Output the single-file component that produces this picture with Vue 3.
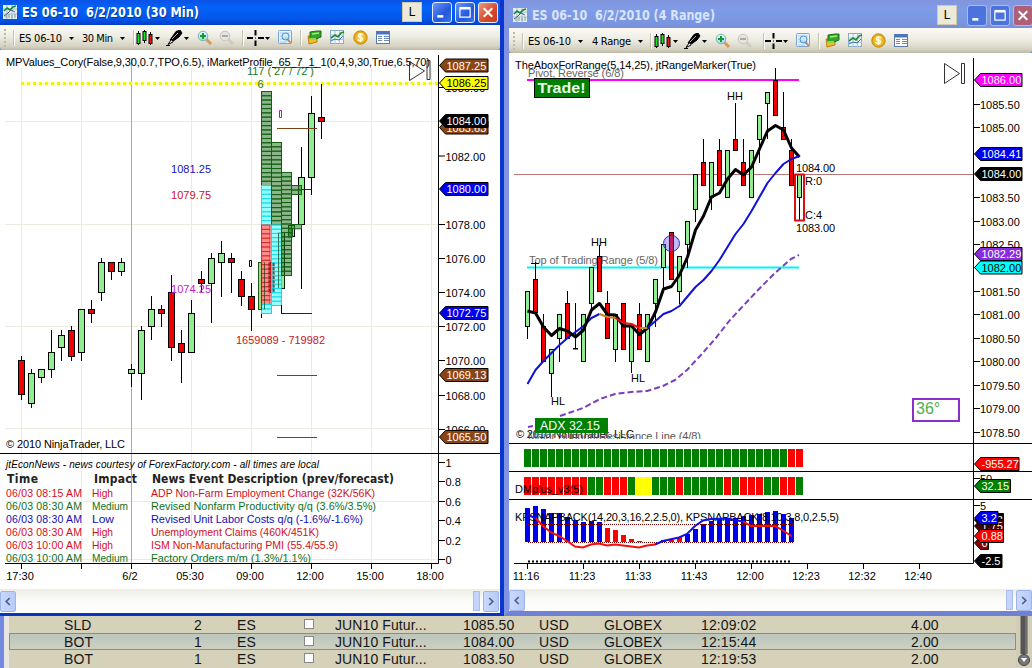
<script setup>
const up = '#90ee90'
const down = '#f00000'

const expand = (rows) => rows.map(([x, top, bottom, high, low, dir]) => ({ x, top, bottom, high, low, fill: dir === 'u' ? up : down }))

const leftCandles = expand([
  [21.5, 360.5, 394.5, 356, 400, 'd'], [31.5, 373.5, 403.5, 369, 408, 'u'], [41.5, 369.5, 377.5, 369, 383, 'u'],
  [51.5, 352.5, 369.5, 330, 378, 'u'], [61.5, 335.5, 347.5, 330, 361, 'u'], [71.5, 330.5, 356.5, 326, 361, 'd'],
  [81.5, 309.5, 352.5, 309, 361, 'u'], [91.5, 309.5, 313.5, 300, 323, 'd'], [101.5, 262.5, 292.5, 258, 301, 'u'],
  [111.5, 262.5, 271.5, 262, 280, 'd'], [121.5, 262.5, 271.5, 258, 276, 'u'], [131.5, 369.5, 373.5, 364, 387, 'u'],
  [141.5, 330.5, 373.5, 326, 400, 'u'], [151.5, 309.5, 326.5, 296, 340, 'u'], [161.5, 309.5, 313.5, 305, 327, 'd'],
  [171.5, 292.5, 347.5, 275, 361, 'd'], [181.5, 343.5, 352.5, 330, 383, 'd'], [191.5, 313.5, 352.5, 300, 353, 'u'],
  [201.5, 279.5, 283.5, 271, 292, 'd'], [211.5, 258.5, 283.5, 253, 323, 'u'], [221.5, 253.5, 262.5, 241, 297, 'u'],
  [231.5, 258.5, 262.5, 253, 293, 'd'], [241.5, 279.5, 296.5, 271, 306, 'd'], [251.5, 296.5, 309.5, 283, 331, 'd'],
  [261.5, 262.5, 309.5, 262, 318, 'u'], [271.5, 262.5, 292.5, 262, 293, 'd'], [281.5, 232.5, 288.5, 230, 289, 'u'],
  [291.5, 225.5, 236.5, 225, 237, 'u'], [301.5, 177.5, 224.5, 147, 289, 'u'], [311.5, 113.5, 177.5, 96, 195, 'u'],
  [321.5, 117.5, 121.5, 84, 139, 'd']
])

const rightCandles = expand([
  [291.5, 326.5, 291, 339, 'u'], [279.5, 312.5, 267, 312, 'd'], [326.5, 361.5, 314, 361, 'd'], [349.5, 373.5, 349, 397, 'u'],
  [314.5, 338.5, 314, 362, 'u'], [303.5, 338.5, 291, 338, 'd'], [348.5, 349, 303, 349, 'u'], [314.5, 361.5, 314, 361, 'u'],
  [267.5, 303.5, 267, 310, 'u'], [256.5, 291.5, 245, 291, 'd'], [303.5, 338.5, 291, 338, 'd'], [314.5, 349.5, 314, 362, 'u'],
  [303.5, 349.5, 303, 349, 'd'], [326.5, 361.5, 326, 373, 'u'], [314.5, 349.5, 303, 349, 'd'], [314.5, 361.5, 314, 361, 'u'],
  [279.5, 303.5, 279, 327, 'u'], [244.5, 267.5, 244, 290, 'u'], [232.5, 279.5, 232, 279, 'd'], [256.5, 291.5, 256, 304, 'u'],
  [221.5, 244.5, 221, 268, 'u'], [174.5, 209.5, 174, 222, 'u'], [162.5, 185.5, 139, 185, 'd'], [162.5, 197.5, 162, 210, 'u'],
  [150.5, 185.5, 139, 185, 'd'], [150.5, 197.5, 150, 197, 'u'], [139.5, 150.5, 103, 150, 'd'], [162.5, 185.5, 139, 185, 'd'],
  [150.5, 197.5, 150, 197, 'u'], [115.5, 139.5, 115, 163, 'u'], [92.5, 103.5, 92, 139, 'u'], [80.5, 115.5, 68, 115, 'd'],
  [127.5, 139.5, 92, 139, 'd'], [150.5, 185.5, 139, 185, 'd'], [174.5, 197.5, 174, 221, 'u']
].map((c, i) => [527.5 + 8 * i, ...c]))

const series = (start, ys) => ys.map((y, i) => `${527.5 + 8 * (start + i)},${y}`).join(' ')
const maBlack = series(0, [311, 313, 327, 335.5, 328.5, 331, 337, 330, 310, 303.5, 314.5, 315, 326, 326, 334.5, 328, 312, 289, 286.5, 275, 257, 230, 216, 197, 193, 179, 169.5, 175, 167, 149, 131, 125.5, 130, 148, 157])
const maBlueA = series(0, [384, 370, 361, 353, 345, 338, 332, 326, 318, 314])
const maOrange = series(9, [314, 317, 318])
const maRed = series(11, [318, 323, 324, 328])
const maBlueB = series(15, [328, 321, 314, 311, 306, 296.5, 287, 280, 271, 260, 247, 234, 224, 211, 197, 183, 173, 164, 159, 156])

const block = 4.3
const cell = (x, from, to, w, kind) => {
  const n = Math.round((to - from) / block)
  const h = (to - from) / n
  return Array.from({ length: n }, (_, i) => ({ x, y: from + i * h, w, h, kind }))
}
const profile = [
  ...cell(261.5, 91.5, 185.5, 10, 'pg'), ...cell(261.5, 185.5, 225, 10, 'pc'), ...cell(261.5, 225, 304.5, 8.5, 'pr'), ...cell(261.5, 304.5, 313.5, 10, 'pc'),
  ...cell(271.5, 142.5, 225, 10, 'pg'), ...cell(271.5, 225, 305.5, 10, 'pc'),
  ...cell(281.5, 172.5, 275.5, 10, 'pg'), ...cell(291.5, 185.5, 194.5, 10, 'pg'), ...cell(291.5, 224.5, 228.8, 10, 'pg'), ...cell(288.5, 228.8, 237, 4, 'pg')
]

const leftTicks = [['1082.00', 156], ['1078.00', 224.5], ['1076.00', 258.5], ['1074.00', 292.5], ['1072.00', 326.5], ['1070.00', 360.5], ['1068.00', 395.5], ['1066.00', 429.5], ['1086.00', 87.5],
  ['1', 462.5], ['0.8', 481.5], ['0.6', 501.5], ['0.4', 520.5], ['0.2', 540.5], ['0', 559.5]]
const leftTags = [['1087.25', 65.5, '#8b4513', '#fff'], ['1086.25', 83, '#ffff00', '#000'], ['1083.63', 127.5, '#8b4513', '#fff'], ['1084.00', 121, '#000', '#fff'],
  ['1080.00', 189, '#0000f0', '#fff'], ['1072.75', 313, '#0000f0', '#fff'], ['1069.13', 375, '#8b4513', '#fff'], ['1065.50', 437, '#8b4513', '#fff']]
const leftTimes = [['17:30', 20], ['6/2', 130], ['05:30', 190], ['09:00', 250], ['12:00', 310], ['15:00', 370], ['18:00', 430]]
const leftGrid = [21.5, 81.5, 191.5, 251.5, 311.5, 371.5, 431.5]

const rightTicks = [['1085.50', 104.5], ['1085.00', 127.5], ['1083.50', 197.5], ['1083.00', 221.5], ['1082.50', 244.5], ['1081.50', 291.5], ['1081.00', 314.5], ['1080.50', 338.5],
  ['1080.00', 361.5], ['1079.50', 385.5], ['1079.00', 408.5], ['1078.50', 432.5], ['50', 478.5], ['5', 505.5]]
const rightTags = [['1086.00', 80, '#ff00ff', '#fff', 1022], ['1084.41', 154, '#0000f0', '#fff', 1022], ['1084.00', 174, '#000', '#fff', 1022],
  ['1082.29', 254, '#8a2be2', '#fff', 1022], ['1082.00', 267.5, '#00ffff', '#000', 1022], ['-955.27', 464, '#ff0000', '#fff', 1019], ['32.15', 486, '#008000', '#fff', 1010.5],
  ['2.53', 520, '#000', '#fff', 1003.5], ['1.75', 526, '#400', '#fff', 1003.5], ['0', 543, '#8b0000', '#fff', 988.5],
  ['3.2', 518, '#0000f0', '#fff', 998], ['0.88', 536, '#ff0000', '#fff', 1003.5], ['-2.5', 561, '#000', '#fff', 1002]]
const rightTimes = ['11:16', '11:23', '11:33', '11:43', '12:00', '12:23', '12:32', '12:40']

const colours = { R: '#fe0000', G: '#008000', Y: '#ffff00' }
const trend = [...'G'.repeat(33), 'R', 'R'].map((c) => colours[c])
const dmPlus = [...'RRRRRRRRGGRRRGYYGGGRGGGGGRGRRRGGRRG'].map((c) => colours[c])
const blue = '#0000f0'
const histogram = [508, 506, 509, 513, 513, 517, 520, 522, 521, 522, 528, 530, 535, 539, 541, 542, 542, 540, 540, 537, 534, 529, 524, 521, 519, 518, 518, 516, 515, 514, 512, 511, 514, 518]
  .map((y, i) => ({ x: 525 + 8 * i, y, fill: (i > 9 && i < 15) || i === 18 || i === 19 ? '#ff0000' : blue }))

const news = [
  ['06/03 08:15 AM', 'High', 'ADP Non-Farm Employment Change (32K/56K)', '#d2101c', 224, 21],
  ['06/03 08:30 AM', 'Medium', 'Revised Nonfarm Productivity q/q (3.6%/3.5%)', '#10701c', 225, 36],
  ['06/03 08:30 AM', 'Low', 'Revised Unit Labor Costs q/q (-1.6%/-1.6%)', '#1010b4', 212, 22],
  ['06/03 08:30 AM', 'High', 'Unemployment Claims (460K/451K)', '#d2101c', 168, 21],
  ['06/03 10:00 AM', 'High', 'ISM Non-Manufacturing PMI (55.4/55.9)', '#d2101c', 187, 21],
  ['06/03 10:00 AM', 'Medium', 'Factory Orders m/m (1.3%/1.1%)', '#10701c', 160, 36]
]

const windows = [
  { id: 'min', title: 'ES 06-10\u00a0 6/2/2010 (30 Min)', width: 177, interval: '30 Min', iw: 31 },
  { id: 'range', title: 'ES 06-10\u00a0 6/2/2010 (4 Range)', width: 183, interval: '4 Range', iw: 39 }
]
const tools = ['arrow', 'bar', 'candles', 'arrow', 'pen', 'arrow', 'zoomin', 'zoomout', 'bar', 'cross', 'arrow', 'find', 'bar', 'cards', 'chart', 'coin', 'sheet']

const orders = [
  ['SLD', '2', '1085.50', '12:09:02', '4.00'],
  ['BOT', '1', '1084.00', '12:15:44', '2.00'],
  ['BOT', '1', '1083.50', '12:19:53', '2.00']
]
const tagPath = (y, right) => (x) => `M${x} ${y}l6 -6.5H${right}v13H${x + 6}z`
</script>

<template>
  <main class="desktop">
    <svg class="defs" width="0" height="0">
      <defs>
        <linearGradient id="lens" x2="0" y2="1"><stop offset="0" stop-color="#e9fbff" /><stop offset="1" stop-color="#9fd3ee" /></linearGradient>
        <radialGradient id="gold"><stop offset="0" stop-color="#ffe66a" /><stop offset="1" stop-color="#e0a010" /></radialGradient>
      </defs>
      <symbol id="i-app" viewBox="0 0 14 14">
        <rect width="14" height="14" fill="#e6f0ee" /><path d="M0 4h14M0 9h14M4 0v14M9 0v14" stroke="#a9bfd0" />
        <path d="M1 6l3-3 3 2 3-3 3-1" fill="none" stroke="#14853c" stroke-width="1.6" /><path d="M1 11l4-3 3-3 4 2" fill="none" stroke="#40617e" />
        <path d="M3 13v-3M6 13v-4M9 13v-3M12 13v-4" stroke="#7f9a95" />
      </symbol>
      <symbol id="i-arrow" viewBox="0 0 5 16"><path d="M0 7h5L2.5 10z" /></symbol>
      <symbol id="i-bar" viewBox="0 0 2 16"><path d="M.5 0v16" stroke="#c5c2b2" /><path d="M1.5 0v16" stroke="#fff" /></symbol>
      <symbol id="i-candles" viewBox="0 0 17 16">
        <path d="M2.5 1v14M8.5 0v13M14.5 2v13" stroke="#000" /><rect x="1" y="3.5" width="3" height="10" fill="#19e52e" stroke="#000" />
        <rect x="7" y="1.5" width="3" height="9" fill="#19e52e" stroke="#000" /><rect x="13" y="4.5" width="3" height="9" fill="#f01818" stroke="#000" />
      </symbol>
      <symbol id="i-pen" viewBox="0 0 17 16"><path d="M10 1.5l4-1.5 2 3-3 4-7 5-2-2z" stroke="#000" /><path d="M6 9l6-6" stroke="#aaa" /><path d="M5 10l-3 4.5L7 12" fill="#fff" stroke="#000" /><path d="M0 15.5h4" stroke="#000" /></symbol>
      <symbol id="i-zoomin" viewBox="0 0 16 16"><path d="M9 9l5 5" stroke="#d99a5b" stroke-width="3" /><circle cx="6" cy="6" r="4.8" fill="url(#lens)" stroke="#79b7b4" /><path d="M3 6h6M6 3v6" stroke="#159a30" stroke-width="2" /></symbol>
      <symbol id="i-zoomout" viewBox="0 0 16 16"><path d="M9 9l5 5" stroke="#cfccc5" stroke-width="3" /><circle cx="6" cy="6" r="4.8" fill="#e5e4df" stroke="#c5c4c0" /><path d="M3 6h6" stroke="#aaa9a6" stroke-width="2" /></symbol>
      <symbol id="i-cross" viewBox="0 0 17 16"><path d="M0 8h6M11 8h6M8.5 0v5.500M8.5 10.500v5.500" stroke="#000" stroke-width="2" /><path d="M8 8h1" stroke="#000" /></symbol>
      <symbol id="i-find" viewBox="0 0 15 15"><rect x=".5" y=".5" width="13" height="13" rx="1" fill="#e5f3ff" stroke="#78a5d6" /><path d="M2 3h10M2 6h10M2 9h10M2 12h7" stroke="#a8caeb" /><path d="M9 9l4 4" stroke="#c68b63" stroke-width="2" /><circle cx="7.5" cy="6.5" r="3.5" fill="url(#lens)" stroke="#4f8fc5" /></symbol>
      <symbol id="i-cards" viewBox="0 0 15 15"><path d="M1 6h9v6l-8 2z" fill="#f0bc2a" stroke="#bc8010" /><path d="M3 2l7-1h4v6l-5 2H3z" fill="#2fa52b" stroke="#157217" /><path d="M5 4l7-1" stroke="#a5ef73" stroke-width="1.5" /><path d="M3 8h6v2H3z" fill="#8edc3d" /></symbol>
      <symbol id="i-chart" viewBox="0 0 15 15"><rect x=".5" y=".5" width="13" height="13" fill="#f3f8fc" stroke="#89aac6" /><path d="M1 5h13M1 9.5h13M5 1v13M9.5 1v13" stroke="#aac6db" /><path d="M1 8l4-3 3 2 3-4 3-1" fill="none" stroke="#228a35" stroke-width="1.6" /><path d="M1 11l4-2 4 1 4-4" fill="none" stroke="#3478a8" /></symbol>
      <symbol id="i-coin" viewBox="0 0 15 15"><circle cx="7.5" cy="7.5" r="6.7" fill="url(#gold)" stroke="#c98b0b" /><path d="M10 5C8 3 5 4 5.5 6s4 1 4 3-3 2.500-5 .5M7.5 3v9" fill="none" stroke="#fffbd8" stroke-width="1.4" /></symbol>
      <symbol id="i-sheet" viewBox="0 0 15 15"><rect x=".5" y="1.500" width="13" height="12" fill="#fff" stroke="#5c79a9" /><path d="M1 3h12" stroke="#4a75c4" stroke-width="3" /><path d="M2 6.500h4M2 8.500h4M2 10.500h4M8 6.500h5M8 8.500h5M8 10.500h5" stroke="#6e8cb5" /></symbol>
    </svg>

    <section v-for="w in windows" :key="w.id" class="window" :class="w.id">
      <header class="titlebar">
        <svg class="appicon"><use href="#i-app" /></svg>
        <svg class="caption"><text class="title" x="0" y="15" :textLength="w.width" lengthAdjust="spacingAndGlyphs">{{ w.title }}</text></svg>
        <span class="link">L</span>
        <button class="ctl"><svg viewBox="0 0 21 21"><path d="M5 15h7" stroke="#fff" stroke-width="3" /></svg></button>
        <button class="ctl"><svg viewBox="0 0 21 21"><path d="M4.500 6v10h12V6" fill="none" stroke="#fff" stroke-width="1.400" /><path d="M4 5.500h13" stroke="#fff" stroke-width="3" /></svg></button>
        <button class="ctl close"><svg viewBox="0 0 21 21"><path d="M5.500 5.500l10 10M15.500 5.500l-10 10" stroke="#fff" stroke-width="2.300" /></svg></button>
      </header>

      <nav class="toolbar">
        <span class="grip"></span>
        <svg class="tool bar"><use href="#i-bar" /></svg>
        <svg class="word"><text class="ui" x="0" y="12" textLength="43">ES 06-10</text></svg>
        <svg class="tool arrow"><use href="#i-arrow" /></svg>
        <svg class="word"><text class="ui" x="0" y="12" :textLength="w.iw">{{ w.interval }}</text></svg>
        <svg v-for="(t, i) in tools" :key="i" class="tool" :class="t"><use :href="'#i-' + t" /></svg>
      </nav>

      <svg v-if="w.id === 'min'" class="plot" viewBox="0 50 500 539">
        <g stroke="#ecebe2">
          <path v-for="x in leftGrid" :key="x" :d="`M${x} 68V563`" />
          <path v-for="y in [121.5, 224.5, 326.5, 428.5, 501.5, 559.5]" :key="y" :d="`M5 ${y}H438`" />
        </g>
        <path d="M131.500 58V563" stroke="#aaa" />
        <path d="M21 83.500H438" stroke="#ffff9a" stroke-width="2" /><path d="M21 83.500H438" stroke="#f4f400" stroke-width="3" stroke-dasharray="3 3" />
        <g v-for="c in leftCandles" :key="c.x"><path :d="`M${c.x} ${c.high}V${c.low}`" stroke="#000" /><rect :x="c.x - 3" :y="c.top" width="6" :height="c.bottom - c.top" :fill="c.fill" stroke="#000" /></g>
        <rect v-for="(p, i) in profile" :key="i" :class="p.kind" :x="p.x" :y="p.y" :width="p.w" :height="p.h" />
        <path d="M269.500 263v30M273.500 263v30" stroke="#5d2020" stroke-opacity=".7" stroke-width="2" stroke-dasharray="3 1.300" />
        <path d="M258.500 262.500h3v47h-3z" fill="#b3cf83" stroke="#1d5b1d" />
        <path d="M264.500 262.500v47M278.500 233v55M284.500 233v55M281.500 288.500h3" fill="none" stroke="#0b3d0b" stroke-opacity=".6" />
        <path d="M301 189.500h10.500" stroke="#1010d0" /><path d="M281.500 305v8" stroke="#000" /><path d="M281 313.500h31" stroke="#1010d0" />
        <path d="M277 128.500h40M277 375.500h40M277 437.500h40M272 67.500h45" stroke="#7a4317" />
        <path d="M279.500 110.500h2v7h-2z" fill="none" stroke="#d000d0" /><path d="M249.500 260.500h2v6h-2z" fill="#fff" stroke="#000" />
        <text x="6" y="66" textLength="424">MPValues_Cory(False,9,30,0.7,TPO,6.5), iMarketProfile_65_7_1_1(0,4,9,30,True,6.5,70)</text>
        <g fill="#207820"><text x="247" y="75" textLength="67">117 ( 27 / 72 )</text><text x="257.500" y="88">6</text></g>
        <text x="171" y="173" textLength="40" fill="#1414bc">1081.25</text><text x="171" y="199" textLength="40" fill="#c8141c">1079.75</text>
        <text x="171" y="293" textLength="40" fill="#c818c8">1074.25</text><text x="236" y="344" textLength="89" fill="#c8141c">1659089 - 719982</text>
        <text x="6" y="448" textLength="119">© 2010 NinjaTrader, LLC</text>
        <path d="M409.500 61.500v19l15-9.500zM427 60.500h3v19h-3z" fill="none" stroke="#333" />
        <text class="italic" x="6" y="468" textLength="313">jtEconNews - news courtesy of ForexFactory.com - all times are local</text>
        <g class="heading"><text x="7" y="483" textLength="31">Time</text><text x="94" y="483" textLength="43">Impact</text><text x="152" y="483" textLength="242">News Event Description (prev/forecast)</text></g>
        <g v-for="(n, i) in news" :key="i" :fill="n[3]" class="news"><text x="6" :y="497 + i * 13" textLength="76">{{ n[0] }}</text><text x="92" :y="497 + i * 13" :textLength="n[5]" lengthAdjust="spacingAndGlyphs">{{ n[1] }}</text><text x="151" :y="497 + i * 13" :textLength="n[4]" lengthAdjust="spacingAndGlyphs">{{ n[2] }}</text></g>
        <rect x="0" y="563" width="438" height="8" fill="#fff" />
        <path d="M0 453.500H500M438.500 55V563.500M5 563.500H438.500" stroke="#000" fill="none" />
        <path d="M81.500 563v6" stroke="#000" />
        <g v-for="t in leftTimes" :key="t[0]"><path :d="`M${t[1] + 1.5} 563v6`" stroke="#000" /><text :x="t[1]" y="580" text-anchor="middle">{{ t[0] }}</text></g>
        <g v-for="t in leftTicks" :key="t[0]"><path :d="`M439 ${t[1]}h6`" stroke="#000" /><text x="445.500" :y="t[1] + 4.5">{{ t[0] }}</text></g>
        <g v-for="t in leftTags" :key="t[0]"><path :d="tagPath(t[1], 488)(439.500)" :fill="t[2]" stroke="#000" /><text x="446.500" :y="t[1] + 4" :fill="t[3]">{{ t[0] }}</text></g>
      </svg>

      <svg v-else class="plot" viewBox="509 53 523 536">
        <path d="M514 174.500H973" stroke="#b87878" />
        <path d="M527 80H799" stroke="#ff00ff" stroke-width="2" /><path d="M527 267.500H799" stroke="#00f5f5" stroke-width="2" />
        <g fill="#666"><text x="528" y="77" textLength="96">Pivot, Reverse (6/8)</text><text x="529" y="264" textLength="129">Top of Trading Range (5/8)</text></g>
        <g v-for="c in rightCandles" :key="c.x"><path :d="`M${c.x} ${c.high}V${c.low}`" stroke="#000" /><rect :x="c.x - 2" :y="c.top" width="4" :height="c.bottom - c.top" :fill="c.fill" stroke="#000" /></g>
        <g fill="none" stroke-width="2" stroke-linejoin="round">
          <path d="M528 427L533 426M560 416L583 408L600 399L615 394L631 392L647 391L663 386L675 380L687 370L700 356L715 339L730 320L743 306L759 289L775 273L791 259L799 255" stroke="#7b3fbe" stroke-dasharray="6 3" />
          <polyline :points="maBlueA" stroke="#1010d8" /><polyline :points="maBlack" stroke="#000" stroke-width="3" />
          <polyline :points="maOrange" stroke="#d08020" /><polyline :points="maRed" stroke="#f01010" /><path d="M639.500 328h8" stroke="#c09020" /><polyline :points="maBlueB" stroke="#1010d8" />
          <rect x="795" y="174.500" width="9" height="46" stroke="#d81010" />
        </g>
        <circle cx="671.500" cy="243.500" r="8" fill="#6450f0" fill-opacity=".4" stroke="#2828d0" />
        <path d="M531 263.500h8M535.500 262v7" stroke="#000" />
        <text x="515" y="69" textLength="241">TheAboxForRange(5,14,25), jtRangeMarker(True)</text>
        <rect x="534.500" y="78.500" width="55" height="19" fill="#008000" stroke="#000" /><text class="trade" x="537.500" y="93" textLength="48" lengthAdjust="spacingAndGlyphs">Trade!</text>
        <text x="591" y="246">HH</text><text x="727" y="100">HH</text><text x="551" y="405">HL</text><text x="631" y="382">HL</text>
        <text x="796" y="172" textLength="39">1084.00</text><text x="805" y="185">R:0</text><text x="805" y="219">C:4</text><text x="796" y="232" textLength="39">1083.00</text>
        <text x="516" y="438" textLength="118">© 2010 NinjaTrader, LLC</text><text x="528" y="440" textLength="173" fill="#555">Major Support/Resistance Line (4/8)</text>
        <rect x="514" y="439" width="300" height="4" fill="#fff" />
        <rect x="535" y="418" width="73" height="15" fill="#008000" /><text class="adx" x="540" y="430" textLength="60" lengthAdjust="spacingAndGlyphs">ADX 32.15</text>
        <path d="M944.500 63.500v20l15-10zM961.500 63.500h3v20h-3z" fill="none" stroke="#333" />
        <rect x="913" y="399" width="46" height="22" fill="#fff" stroke="#8b2fc9" stroke-width="2" /><text class="angle" x="916" y="414">36°</text>

        <rect v-for="(c, i) in trend" :key="'a' + i" :x="524 + i * 8" y="449" width="7" height="18" :fill="c" />
        <rect v-for="(c, i) in dmPlus" :key="'b' + i" :x="524 + i * 8" y="477" width="7" height="18" :fill="c" />
        <text x="515" y="493" textLength="68">DMplus_v3(5)</text>
        <rect v-for="b in histogram" :key="b.x" :x="b.x" :y="b.y" width="5" :height="542 - b.y" :fill="b.fill" />
        <path d="M528 524.500H793M528 542.500H793" stroke="#700" stroke-dasharray="1 1" /><path d="M528 561.500H790" stroke="#000" stroke-width="2" stroke-dasharray="2 2" />
        <text x="515" y="521" textLength="324">KPSNAPBACK(14,20,3,16,2,2.5,0), KPSNAPBACK(8,10,3,8,0,2.5,5)</text>
        <g fill="none" stroke-width="2">
          <path d="M535.500 518L543 526L551 532.500L559 536L567 541L575 546.500L583 547.500L591 544.500L599 543.500L607 545.500L615 544.500L639 547.500L647 545.500L655 544.500" stroke="#f01010" />
          <path d="M527.500 515L535.500 518M655 544.500L663 541L679 537.500L687 534L695 526L703 520.500L711 519L727 518.500L743 521.500" stroke="#1010e8" />
          <path d="M743 521.500L751 526H775L783 530.500L792 536.500" stroke="#f01010" />
        </g>
        <path d="M509 443.500H1032M509 471.500H1032M509 499.500H1032M973.500 58V563.500M514 563.500H973.500" stroke="#000" />
        <g v-for="(t, i) in rightTimes" :key="t"><path :d="`M${527.5 + i * 56} 563v6`" stroke="#000" /><text :x="526 + i * 56" y="580" text-anchor="middle">{{ t }}</text></g>
        <g v-for="t in rightTicks" :key="t[0]"><path :d="`M974 ${t[1]}h6`" stroke="#000" /><text x="980" :y="t[1] + 4.5">{{ t[0] }}</text></g>
        <g v-for="t in rightTags" :key="t[0] + t[1]"><path :d="tagPath(t[1], t[4])(974.500)" :fill="t[2]" stroke="#000" /><text x="981.500" :y="t[1] + 4" :fill="t[3]">{{ t[0] }}</text></g>
      </svg>

      <footer class="scroll">
        <span class="step"><svg viewBox="0 0 16 20"><path d="M10 6l-4 4 4 4" /></svg></span>
        <span class="thumb"></span>
        <span class="step"><svg viewBox="0 0 16 20"><path d="M6 6l4 4-4 4" /></svg></span>
      </footer>
    </section>

    <section class="blotter">
      <div class="edge"></div>
      <div class="rows">
        <div v-for="(o, i) in orders" :key="i" class="order" :class="{ selected: i === 1 }">
          <span>{{ o[0] }}</span><span>{{ o[1] }}</span><span>ES</span><span><i class="check"></i></span><span>JUN10 Futur...</span><span>{{ o[2] }}</span><span>USD</span><span>GLOBEX</span><span>{{ o[3] }}</span><span>{{ o[4] }}</span>
        </div>
      </div>
      <div class="slider"><svg viewBox="0 0 16 52"><path d="M8 0v38" stroke="#555" stroke-width="7" /><path d="M10 0v38" stroke="#888" /><circle cx="8" cy="44" r="5.500" fill="#777" stroke="#444" /><path d="M5 42h6l-3 4z" fill="#fff" /></svg></div>
    </section>
  </main>
</template>

<style>
body { overflow: hidden; }
</style>

<style scoped>
.desktop { width: 1032px; height: 668px; overflow: hidden; display: grid; grid-template-columns: 504px 528px; grid-template-rows: 616px 52px; background: #6f86d6; font-family: "Liberation Sans", Arial, sans-serif; }
.defs { position: absolute; }
.window { box-sizing: border-box; display: flex; flex-direction: column; overflow: hidden; }
.min { border-right: 4px solid #0a35cf; border-bottom: 3px solid #0a35b8; }
.range { border-left: 5px solid #7f93e0; border-bottom: 5px solid #7182d2; }
.titlebar { display: flex; align-items: center; flex: none; box-sizing: border-box; }
.min .titlebar { height: 25px; padding: 0 2px 1px 3px; background: linear-gradient(#0a52e8, #0462f6 30%, #0256ea 75%, #023fca); }
.range .titlebar { height: 28px; padding: 2px 0 0 4px; background: linear-gradient(#8195dd, #7f9ce8 35%, #7a96e0 80%, #7a8fd8); }
.appicon { width: 14px; height: 14px; flex: none; margin-right: 5px; }
.caption { width: 230px; height: 20px; flex: none; margin-right: auto; }
.title { font: bold 13.5px "DejaVu Sans Condensed", "Open Sans", sans-serif; fill: #fff; text-shadow: 1px 1px #083a9c; }
.range .title { fill: #d9e4fb; text-shadow: none; }
.link { box-sizing: border-box; width: 20px; height: 20px; background: #ece9d8; border: 1px solid #d0c9aa; font-size: 12px; line-height: 19px; text-align: center; margin-right: 10px; }
.ctl { box-sizing: border-box; width: 20px; height: 21px; margin-right: 3px; padding: 0; border: 1px solid #e5ecff; border-radius: 3px; background: linear-gradient(135deg, #6c95f5, #2258dc 60%, #3774ee); flex: none; }
.ctl svg { display: block; width: 18px; height: 19px; }
.close { background: linear-gradient(135deg, #ee9a7e, #d9472a 60%, #c83c1c); margin-right: 0; }
.range .ctl { width: 20px; border-color: #a9bcf0; margin-right: 3px; background: #4c73dc; }
.range .close { background: #ae6078; margin-right: -1px; }
.range .link { margin-right: 10px; }
.toolbar { flex: none; height: 25px; box-sizing: border-box; display: grid; align-items: center; background: linear-gradient(#fbfaf6, #eeede3 45%, #d5d2c2 85%, #bebaa4); border-radius: 0 0 3px 3px; }
.min .toolbar { grid-template-columns: 13px 6px 50px 13px 38px 13px 3px 19px 11px 18px 13px 22px 23px 5px 18px 13px 22px 7px 23px 23px 23px 20px; }
.range .toolbar { grid-template-columns: 13px 6px 50px 14px 46px 12px 4px 19px 11px 18px 13px 22px 26px 2px 18px 13px 22px 7px 23px 23px 23px 20px; }
.grip { width: 2px; height: 18px; margin-left: 4px; background: repeating-linear-gradient(#bdb9aa 0 2px, transparent 2px 4px); }
.word { width: 100%; height: 16px; overflow: visible; }
.ui { font: 11px "DejaVu Sans Condensed", "Noto Sans", sans-serif; }
.tool { height: 16px; width: 16px; }
.arrow { width: 5px; }
.bar { width: 2px; }
.candles, .pen, .cross { width: 17px; }
.find, .cards, .chart, .coin, .sheet { width: 15px; height: 15px; }
.plot { display: block; background: #fff; flex: none; }
.min .plot { width: 500px; height: 539px; }
.range .plot { width: 523px; height: 536px; }
.plot text { font-size: 11px; }
.plot .italic { font-size: 10px; font-style: italic; }
.plot .heading text { font: bold 12px "DejaVu Sans Condensed", sans-serif; fill: #222; }
.plot .news text { font-size: 10.5px; }
.plot .trade { font-size: 15.5px; font-weight: bold; fill: #e8ffe8; }
.plot .adx { font-size: 13.5px; fill: #fff; }
.plot .angle { font-size: 16px; fill: #4eae50; }
.pg { fill: #388038; fill-opacity: .58; stroke: #126012; stroke-width: 1; }
.pc { fill: #80ffff; fill-opacity: .8; stroke: #10dce8; stroke-width: 1; }
.pr { fill: #ff8080; fill-opacity: .9; stroke: #d82828; stroke-width: 1; }
.scroll { flex: 1; display: flex; align-items: center; background: linear-gradient(#eeeee6, #fbfbf8 50%, #fff); }
.step { box-sizing: border-box; width: 16px; height: 21px; background: linear-gradient(90deg, #c9d8fd, #b8cbf7); border: 1px solid #9eb5ea; border-radius: 2px; flex: none; }
.step svg { display: block; width: 14px; height: 19px; }
.step path { fill: none; stroke: #4d6185; stroke-width: 2; }
.thumb { box-sizing: border-box; width: 7px; height: 20px; background: #c4d4fc; border: 1px solid #a9bdf0; margin-left: auto; margin-right: 3px; }
.min .scroll { padding-right: 1px; }
.blotter { grid-column: 1 / 3; display: flex; background: #d5d2b9; }
.edge { width: 4px; background: #7389df; border-right: 5px solid #e6e5e0; }
.rows { flex: 1; }
.order { box-sizing: border-box; height: 17px; display: grid; align-items: center; grid-template-columns: 54px 130px 43px 67px 31px 128px 76px 65px 97px 210px auto; font-size: 14px; line-height: 17px; color: #161616; border: 1px solid transparent; }
.order span { white-space: nowrap; letter-spacing: .1px; }
.order span:first-child { grid-column: 2; }
.selected { background: linear-gradient(#bcc6bd, #ccd0c0); border-color: #7f918f; }
.check { display: block; box-sizing: border-box; width: 10px; height: 10px; background: #fff; border: 1px solid #888; margin: -3px 0 0; }
.slider { width: 16px; background: #d1cdb8; }
.slider svg { display: block; width: 16px; height: 52px; }
</style>
